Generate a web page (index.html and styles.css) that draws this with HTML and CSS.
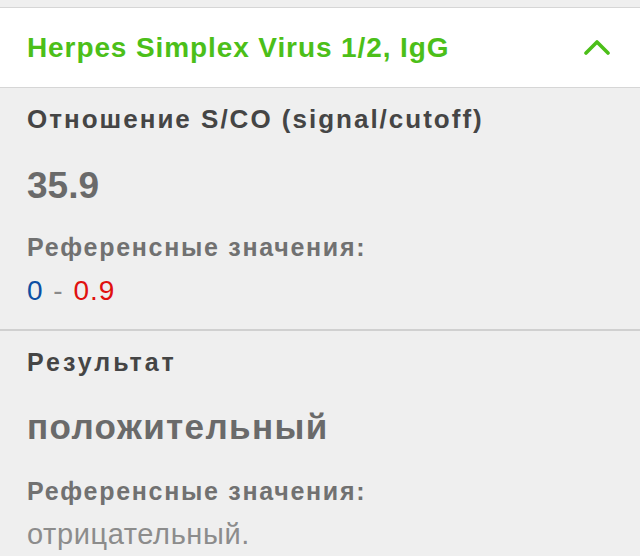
FILE: index.html
```html
<!DOCTYPE html>
<html lang="ru">
<head>
<meta charset="utf-8">
<title>Herpes Simplex Virus 1/2, IgG</title>
<link rel="stylesheet" href="styles.css">
</head>
<body>
<div class="page">
  <header class="acc-head">
    <h1 class="acc-title">Herpes Simplex Virus 1/2, IgG</h1>
    <svg class="chevron" width="26" height="16" viewBox="0 0 26 16" aria-hidden="true">
      <polyline points="2,14 13,3 24,14" fill="none" stroke="#4cbf19" stroke-width="3.6" stroke-linecap="round" stroke-linejoin="round"/>
    </svg>
  </header>

  <section class="block block-first">
    <div class="label label-ratio">Отношение S/CO (signal/cutoff)</div>
    <div class="value value-num">35.9</div>
    <div class="ref-label ref-label-1">Референсные значения:</div>
    <div class="range"><span class="lo">0</span> <span class="dash">-</span> <span class="hi">0.9</span></div>
  </section>

  <section class="block block-second">
    <div class="label label-result">Результат</div>
    <div class="value value-word">положительный</div>
    <div class="ref-label ref-label-2">Референсные значения:</div>
    <div class="ref-text">отрицательный.</div>
  </section>
</div>
</body>
</html>
```

FILE: styles.css
```css
html, body {
  margin: 0;
  padding: 0;
}

body {
  background: #efefef;
  font-family: "Liberation Sans", Arial, Helvetica, sans-serif;
  width: 640px;
  height: 556px;
  overflow: hidden;
}

.page {
  padding-top: 7px;
}

.acc-head {
  display: flex;
  align-items: center;
  justify-content: space-between;
  height: 79px;
  background: #ffffff;
  border-top: 1px solid #d6d6d6;
  border-bottom: 1px solid #d6d6d6;
  padding: 0 30px 0 27px;
}

.acc-title {
  margin: 0;
  font-size: 28px;
  letter-spacing: 0.9px;
  font-weight: bold;
  color: #4cbf19;
  line-height: 34px;
  padding-top: 1px;
}

.chevron {
  display: block;
  margin-top: -1px;
}

.block {
  padding-left: 27px;
}

.block-first {
  padding-top: 16px;
  padding-bottom: 22px;
  border-bottom: 2px solid #d0d0d0;
}

.block-second {
  padding-top: 16px;
}

.label {
  font-weight: bold;
  color: #454545;
  line-height: 30px;
}

.label-ratio {
  font-size: 26px;
  letter-spacing: 2px;
}

.label-result {
  font-size: 25px;
  letter-spacing: 3px;
}

.value {
  font-weight: bold;
  color: #6a6a6a;
}

.value-num {
  font-size: 37px;
  line-height: 44px;
  margin-top: 30px;
}

.value-word {
  font-size: 35px;
  letter-spacing: 1.4px;
  line-height: 42px;
  margin-top: 29px;
}

.ref-label {
  font-size: 25px;
  letter-spacing: 1.7px;
  font-weight: bold;
  color: #717171;
  line-height: 30px;
}

.ref-label-1 {
  margin-top: 24px;
}

.ref-label-2 {
  margin-top: 28px;
}

.range {
  font-size: 28px;
  letter-spacing: 1px;
  word-spacing: 1px;
  line-height: 32px;
  margin-top: 13px;
  color: #8a8a8a;
}

.lo {
  color: #0d4fa3;
}

.dash {
  color: #8a8a8a;
}

.hi {
  color: #e0110f;
}

.ref-text {
  font-size: 29px;
  letter-spacing: 0.6px;
  line-height: 32px;
  margin-top: 12px;
  color: #8c8c8c;
}
```
